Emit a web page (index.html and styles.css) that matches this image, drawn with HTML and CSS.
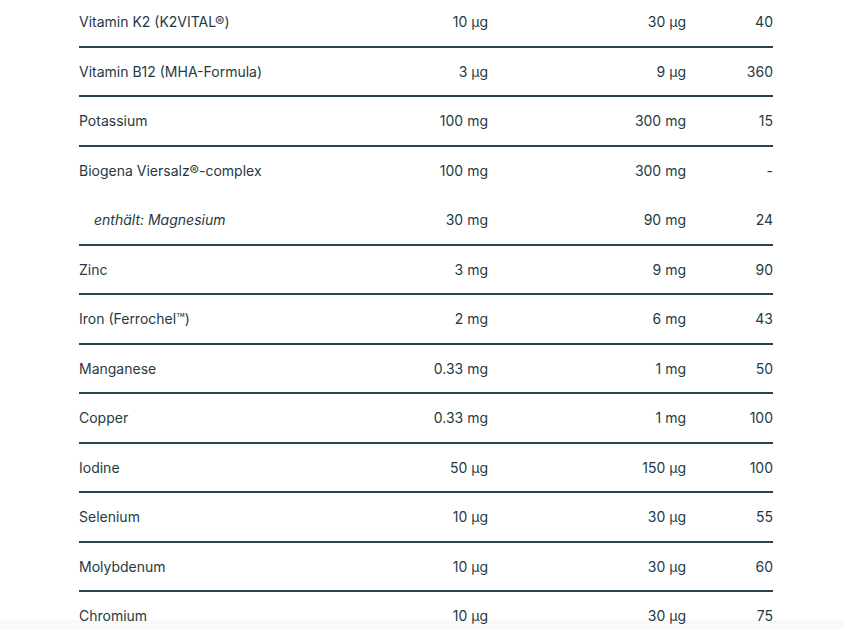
FILE: index.html
```html
<!DOCTYPE html>
<html lang="de">
<head>
<meta charset="utf-8">
<title>Nährwerte</title>
<link rel="stylesheet" href="styles.css">
</head>
<body>
<main class="page">
  <table class="nutri">
    <colgroup>
      <col class="c-name"><col class="c-amt"><col class="c-amt"><col class="c-nrv">
    </colgroup>
    <tbody>
      <tr><td>Vitamin K2 (K2VITAL®)</td><td>10 µg</td><td>30 µg</td><td>40</td></tr>
      <tr><td>Vitamin B12 (MHA-Formula)</td><td>3 µg</td><td>9 µg</td><td>360</td></tr>
      <tr><td>Potassium</td><td>100 mg</td><td>300 mg</td><td>15</td></tr>
      <tr class="parent"><td>Biogena Viersalz®-complex</td><td>100 mg</td><td>300 mg</td><td>-</td></tr>
      <tr class="sub"><td>enthält: Magnesium</td><td>30 mg</td><td>90 mg</td><td>24</td></tr>
      <tr><td>Zinc</td><td>3 mg</td><td>9 mg</td><td>90</td></tr>
      <tr><td>Iron (Ferrochel™)</td><td>2 mg</td><td>6 mg</td><td>43</td></tr>
      <tr><td>Manganese</td><td>0.33 mg</td><td>1 mg</td><td>50</td></tr>
      <tr><td>Copper</td><td>0.33 mg</td><td>1 mg</td><td>100</td></tr>
      <tr><td>Iodine</td><td>50 µg</td><td>150 µg</td><td>100</td></tr>
      <tr><td>Selenium</td><td>10 µg</td><td>30 µg</td><td>55</td></tr>
      <tr><td>Molybdenum</td><td>10 µg</td><td>30 µg</td><td>60</td></tr>
      <tr><td>Chromium</td><td>10 µg</td><td>30 µg</td><td>75</td></tr>
    </tbody>
  </table>
</main>
<div class="fade"></div>
</body>
</html>
```
FILE: styles.css
```css
html, body {
  margin: 0;
  padding: 0;
  background: #ffffff;
  overflow: hidden;
}
body {
  font-family: Inter, "Noto Sans", "Liberation Sans", sans-serif;
  font-size: 14px;
  color: #1f3a43;
}
.page {
  padding-left: 79px;
  width: 694px;
}
.nutri {
  width: 694px;
  border-collapse: collapse;
  table-layout: fixed;
  margin-top: -2px;
}
.c-name { width: 226px; }
.c-amt { width: 198px; }
.c-nrv { width: 72px; }
.nutri td {
  padding: 16px 15px 16px 0;
  line-height: 15.5px;
  text-align: right;
  border-bottom: 2px solid #27454f;
  white-space: nowrap;
}
.nutri td:first-child {
  text-align: left;
}
.nutri td:last-child {
  padding-right: 0;
}
.nutri tr.parent td {
  border-bottom: 2px solid transparent;
}
.nutri tr.sub td:first-child {
  font-style: italic;
  padding-left: 15px;
}
.fade {
  position: fixed;
  left: 0;
  right: 0;
  bottom: 0;
  height: 10px;
  background: rgba(0, 0, 0, 0.025);
}
```
